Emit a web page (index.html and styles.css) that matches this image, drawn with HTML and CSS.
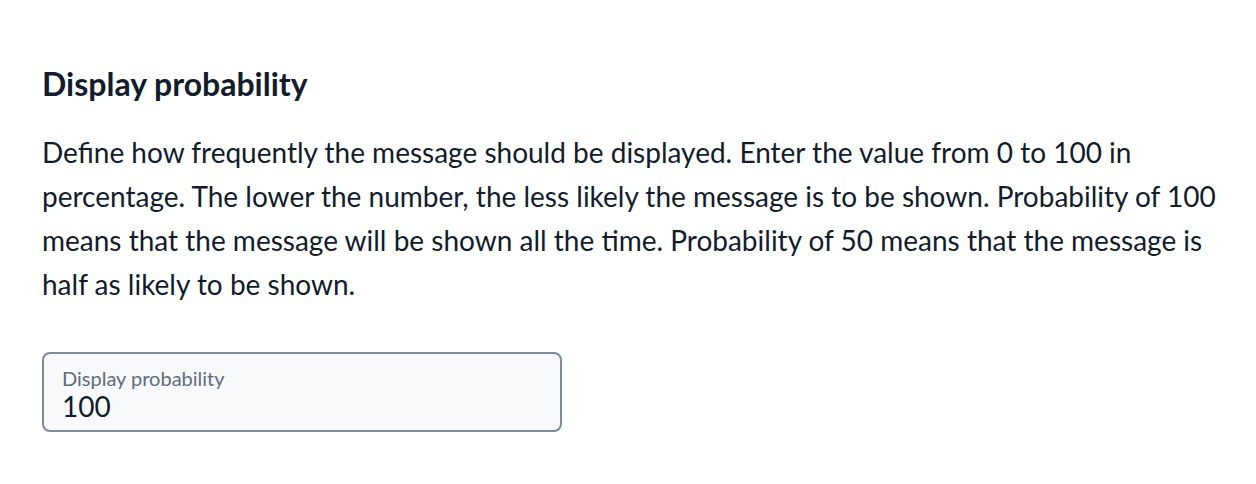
FILE: index.html
```html
<!DOCTYPE html>
<html lang="en">
<head>
  <meta charset="UTF-8">
  <title>Display probability</title>
  <link rel="stylesheet" href="styles.css">
</head>
<body>
  <section class="settings">
    <h2 class="settings-title">Display probability</h2>
    <p class="settings-text">
      Define how frequently the message should be displayed. Enter the value from 0 to 100 in percentage. The lower the number, the less likely the message is to be shown. Probability of 100 means that the message will be shown all the time. Probability of 50 means that the message is half as likely to be shown.
    </p>
    <label class="field">
      <span class="field-label">Display probability</span>
      <input class="field-input" type="text" value="100">
    </label>
  </section>
</body>
</html>
```

FILE: styles.css
```css
body {
  margin: 0;
  padding: 0;
  background: #ffffff;
  color: #121c2d;
  font-family: Lato, "Noto Sans", sans-serif;
}

.settings {
  width: 1180px;
  padding: 64px 0 0 42px;
}

.settings-title {
  margin: 0;
  font-size: 32px;
  line-height: 40px;
  font-weight: 700;
}

.settings-text {
  margin: 26px 0 0;
  font-size: 28px;
  line-height: 44px;
}

.field {
  display: flex;
  flex-direction: column;
  box-sizing: border-box;
  width: 520px;
  height: 80px;
  margin-top: 46px;
  padding: 12px 18px 0;
  border: 2px solid #7d8a9b;
  border-radius: 8px;
  background: #f8f9fa;
}

.field-label {
  font-size: 20px;
  line-height: 24px;
  color: #606b7d;
}

.field-input {
  margin: 0;
  padding: 0;
  border: none;
  background: transparent;
  font-family: inherit;
  font-size: 28px;
  line-height: 32px;
  height: 32px;
  color: #121c2d;
  outline: none;
}
```
